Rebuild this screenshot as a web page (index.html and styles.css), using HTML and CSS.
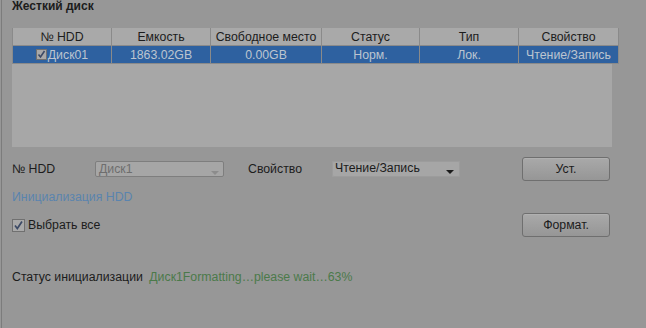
FILE: index.html
```html
<!DOCTYPE html>
<html lang="ru">
<head>
  <meta charset="UTF-8">
  <title>Жесткий диск</title>
  <link rel="stylesheet" href="styles.css">
</head>
<body>
  <div class="page">
    <h2 class="title">Жесткий диск</h2>

    <div class="grid">
      <table class="hdd-table">
        <thead>
          <tr>
            <th class="c1">№ HDD</th>
            <th class="c2">Емкость</th>
            <th class="c3">Свободное место</th>
            <th class="c4">Статус</th>
            <th class="c5">Тип</th>
            <th class="c6">Свойство</th>
          </tr>
        </thead>
        <tbody>
          <tr class="selected">
            <td><span class="mini-check"><svg width="11" height="11" viewBox="0 0 11 11"><path d="M2.5 5.5 L4.5 8 L8.5 2" fill="none" stroke="#3c4a66" stroke-width="1.6"/></svg></span>Диск01</td>
            <td>1863.02GB</td>
            <td>0.00GB</td>
            <td>Норм.</td>
            <td>Лок.</td>
            <td>Чтение/Запись</td>
          </tr>
        </tbody>
      </table>
    </div>

    <div class="form-row row-set">
      <span class="label lbl-hdd">№ HDD</span>
      <div class="select disabled">Диск1<span class="arrow"></span></div>
      <span class="label lbl-prop">Свойство</span>
      <div class="select plain">Чтение/Запись<span class="arrow"></span></div>
      <button class="btn">Уст.</button>
    </div>

    <div class="link-row">Инициализация HDD</div>

    <div class="form-row row-format">
      <label class="check-all">
        <span class="check"><svg width="13" height="13" viewBox="0 0 13 13"><path d="M3 6.5 L5.3 9.5 L10 2.5" fill="none" stroke="#3c4a66" stroke-width="1.7"/></svg></span>
        Выбрать все
      </label>
      <button class="btn">Формат.</button>
    </div>

    <div class="status-row">
      <span class="status-label">Статус инициализации</span>
      <span class="status-value">Диск1Formatting…please wait…63%</span>
    </div>
  </div>
</body>
</html>
```

FILE: styles.css
```css
body {
  margin: 0;
  background-color: #979797;
  font-family: "Liberation Sans", Arial, sans-serif;
  font-size: 12.3px;
  color: #1c1c1c;
}
.page {
  margin-left: 1px;
  border-left: 1px solid #7c7c7c;
  padding-left: 10px;
  height: 328px;
  box-sizing: border-box;
}
.title {
  margin: 0;
  font-size: 12px;
  line-height: 13px;
  font-weight: bold;
  color: #1c1c1c;
}
.grid {
  margin-top: 15px;
  width: 600px;
  height: 119px;
  background-color: #a7a7a7;
}
.hdd-table {
  border-collapse: collapse;
  width: 600px;
  table-layout: fixed;
}
.hdd-table th,
.hdd-table td {
  border: 1px solid #8a8a8a;
  height: 17px;
  padding: 0;
  text-align: center;
  font-weight: normal;
  white-space: nowrap;
  overflow: hidden;
}
.hdd-table th {
  background-color: #a9a9a9;
  color: #1c1c1c;
  border-top: none;
}
.hdd-table .c1 { width: 98px; }
.hdd-table .c2 { width: 98px; }
.hdd-table .c3 { width: 110px; }
.hdd-table .c4 { width: 97px; }
.hdd-table .c5 { width: 98px; }
.hdd-table .c6 { width: 99px; }
.hdd-table tr.selected td {
  background-color: #2e61a0;
  color: #bcc5d0;
  border-color: #8a8a8a;
}
.mini-check {
  display: inline-block;
  width: 11px;
  height: 11px;
  box-sizing: border-box;
  border: 1px solid #707070;
  background-color: #a9a9a9;
  vertical-align: -1px;
  margin-right: 1px;
  position: relative;
}
.mini-check svg {
  position: absolute;
  left: -1px;
  top: -1px;
}
.form-row {
  display: flex;
  align-items: center;
  width: 598px;
}
.row-set {
  margin-top: 10px;
  height: 24px;
}
.label {
  display: inline-block;
}
.lbl-hdd { width: 83px; }
.lbl-prop { width: 84px; margin-left: 24px; }
.select {
  position: relative;
  height: 16px;
  line-height: 15px;
  box-sizing: border-box;
  padding-left: 3px;
  background-color: #a6a6a6;
}
.select.disabled {
  width: 129px;
  border: 1px solid #7e7e7e;
  border-radius: 2px;
  color: #6e6e6e;
}
.select.plain {
  width: 128px;
  border-radius: 2px;
  color: #1c1c1c;
  box-shadow: inset 0 0 0 1px #9c9c9c;
}
.select .arrow {
  position: absolute;
  right: 6px;
  top: 9px;
  border-left: 4px solid transparent;
  border-right: 4px solid transparent;
  border-top: 4px solid #1c1c1c;
}
.select.disabled .arrow {
  right: 4px;
  border-top-color: #8c8c8c;
}
.btn {
  margin-left: auto;
  width: 88px;
  height: 24px;
  border: 1px solid #6f6f6f;
  border-radius: 3px;
  background: linear-gradient(#a9a9a9, #969696);
  box-shadow: inset 0 1px 0 #b0b0b0;
  font-family: "Liberation Sans", Arial, sans-serif;
  font-size: 12.3px;
  color: #1c1c1c;
  padding: 0;
}
.link-row {
  margin-top: 8px;
  line-height: 16px;
  color: #5a84ae;
}
.row-format {
  margin-top: 8px;
  height: 24px;
}
.check-all {
  display: flex;
  align-items: center;
}
.check {
  display: inline-block;
  width: 13px;
  height: 13px;
  box-sizing: border-box;
  border: 1px solid #707070;
  background-color: #a9a9a9;
  margin-right: 3px;
  position: relative;
}
.check svg {
  position: absolute;
  left: -1px;
  top: -1px;
}
.status-row {
  margin-top: 32px;
  line-height: 16px;
}
.status-label {
  margin-right: 3px;
}
.status-value {
  color: #4b7a4a;
}
```
